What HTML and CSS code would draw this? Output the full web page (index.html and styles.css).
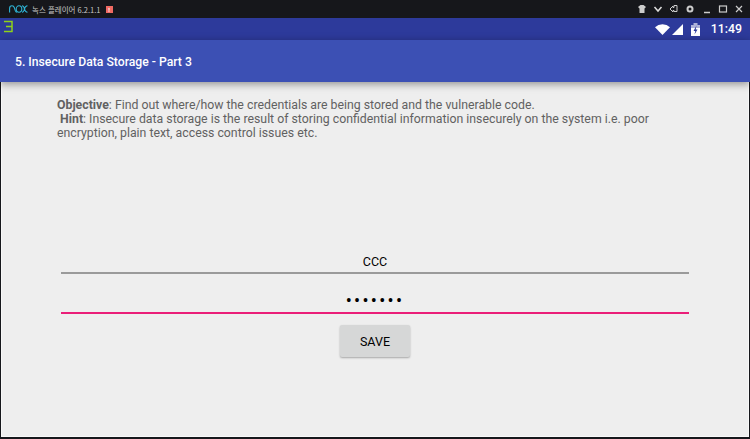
FILE: index.html
```html
<!DOCTYPE html>
<html lang="ko">
<head>
<meta charset="utf-8">
<title>Nox</title>
<link rel="stylesheet" href="styles.css">
</head>
<body>
<div class="window">
  <header class="titlebar">
    <svg class="nox-logo" viewBox="0 0 19 8" width="19" height="8"><path d="M.6 7.500V3.500C.6 1.500 1.800.8 3 .8c1.300 0 2 .9 2.400 2l.8 2.600C6.600 6.600 7 7.200 8 7.200" fill="none" stroke="#2fb4d6" stroke-width="1.100"/><ellipse cx="10" cy="4" rx="2.800" ry="3.200" fill="none" stroke="#2fb4d6" stroke-width="1.100"/><path d="M13 .8c1.500 0 2 1 2.500 3.200s1 3.200 3 3.200M18.500.8c-2 0-2.500 1-3 3.200S14.500 7.200 13 7.200" fill="none" stroke="#2fb4d6" stroke-width="1.100"/></svg>
    <span class="window-title">녹스 플레이어 6.2.1.1</span>
    <span class="alert">!</span>
    <div class="controls">
      <svg viewBox="0 0 10 10" width="10" height="10"><path d="M1 3l2.500-2h3l2.500 2-1.500 1.500V9h-5V4.500z" fill="#ccc"/></svg>
      <svg viewBox="0 0 10 10" width="10" height="10"><path d="M1.500 3l3.500 4 3.500-4" fill="none" stroke="#ddd" stroke-width="1.500"/></svg>
      <svg viewBox="0 0 10 10" width="10" height="10"><path d="M1 5l3-3v1.500h1V1.500h3v6H5V6.500H4V8z" fill="none" stroke="#ccc"/></svg>
      <svg viewBox="0 0 10 10" width="10" height="10"><circle cx="5" cy="5" r="2.500" fill="none" stroke="#ccc" stroke-width="2"/></svg>
      <svg viewBox="0 0 10 10" width="10" height="10"><path d="M2 8.500h6" stroke="#ccc" stroke-width="1.500"/></svg>
      <svg viewBox="0 0 10 10" width="10" height="10"><rect x="1.500" y="2" width="7" height="6" fill="none" stroke="#ccc" stroke-width="1.200"/></svg>
      <svg viewBox="0 0 10 10" width="10" height="10"><path d="M2 2l6 6M8 2l-6 6" stroke="#ccc" stroke-width="1.200"/></svg>
    </div>
  </header>
  <div class="statusbar">
    <svg class="notif" viewBox="0 0 10 13" width="10" height="13"><path d="M1 1.500h8v10H1M3 6.500h6" fill="none" stroke="#8fd21a" stroke-width="1.500"/></svg>
    <div class="status-right">
      <svg class="wifi" viewBox="0 0 15 11" width="15" height="11"><path d="M0 3.300a11 11 0 0 1 15 0L7.500 11z" fill="#fff"/></svg>
      <svg viewBox="0 0 11 11" width="11" height="11"><path d="M0 11L11 0v11z" fill="#fff"/></svg>
      <svg class="battery" viewBox="0 0 9 13" width="9" height="13"><path d="M0 2h2.500V0h4v2H9v3H0z" fill="#aeb2d8"/><path d="M0 5h9v8H0z" fill="#fff"/><path d="M5.500 2.500L2.500 8h1.800L3.500 11.500 6.500 6.500H4.700z" fill="#2d3a9b"/></svg>
      <span class="clock">11:49</span>
    </div>
  </div>
  <div class="appbar"><h1 class="app-title">5. Insecure Data Storage - Part 3</h1></div>
  <main class="content">
    <p class="description"><b>Objective</b>: Find out where/how the credentials are being stored and the vulnerable code.<br>&nbsp;<b>Hint</b>: Insecure data storage is the result of storing confidential information insecurely on the system i.e. poor encryption, plain text, access control issues etc.</p>
    <div class="form">
      <div class="field field-user">CCC</div>
      <div class="field field-pass">•••••••</div>
      <button class="save">SAVE</button>
    </div>
  </main>
</div>
</body>
</html>
```
FILE: styles.css
```css
* { box-sizing: border-box; }
html, body { margin: 0; padding: 0; background: #000; }
body { width: 750px; height: 439px; overflow: hidden; font-family: Roboto, sans-serif; }
.window { width: 750px; height: 439px; display: flex; flex-direction: column; padding: 0 1px 2px; background: #16171b; }
.titlebar { height: 18px; flex: none; display: flex; align-items: center; padding-left: 9px; margin: 0 -1px; color: #c8c8c8; }
.nox-logo { margin-right: 4px; }
.window-title { font: 7.500px "Noto Sans CJK KR", sans-serif; margin-right: 5px; }
.alert { width: 7px; height: 7px; background: #ef6a62; color: #fff; font: bold 6px/7px Roboto, sans-serif; text-align: center; }
.controls { margin-left: auto; display: flex; gap: 6.200px; padding-right: 6px; }
.statusbar { height: 22px; flex: none; background: #2d3a9b; display: flex; align-items: center; justify-content: space-between; margin: 0 -1px; }
.notif { margin: -6px 0 0 3px; }
.status-right { display: flex; align-items: center; gap: 2px; padding-right: 8px; }
.wifi { margin-right: 0; }
.battery { margin-left: 6px; }
.clock { color: #fff; font-size: 12.300px; font-weight: 500; margin-left: 9px; }
.appbar { height: 42px; flex: none; background: #3c50b4; display: flex; align-items: center; padding: 1px 0 0 15px; box-shadow: 0 2px 8px rgba(0,0,0,.4); position: relative; margin: 0 -1px; }
.app-title { margin: 0; color: #fff; font-size: 12.200px; font-weight: 500; }
.content { flex: 1; background: #eeeeee; padding: 16px 60px 0; border: solid #f8f8f8; border-width: 0 1px 1px; }
.description { margin: 0 0 0 -5px; width: 615px; color: #616161; font-size: 12.300px; line-height: 14px; }
.description b { font-weight: 700; }
.form { margin-top: 103px; margin-left: -1px; margin-right: -1px; display: flex; flex-direction: column; align-items: center; }
.field { width: 100%; height: 31px; text-align: center; color: #000; font-size: 12.500px; font-weight: 450; border-bottom: 2px solid #9a9a9a; display: flex; align-items: center; justify-content: center; padding-top: 7px; }
.field-pass { height: 40px; border-bottom-color: #ea1e78; font-size: 18px; letter-spacing: 2.300px; padding-top: 14px; }
.save { margin-top: 11px; width: 70px; height: 32px; border: 0; border-radius: 2px; background: #d6d7d7; color: #000; font: 450 12.500px Roboto, sans-serif; box-shadow: 0 1px 2px rgba(0,0,0,.3); }
```
